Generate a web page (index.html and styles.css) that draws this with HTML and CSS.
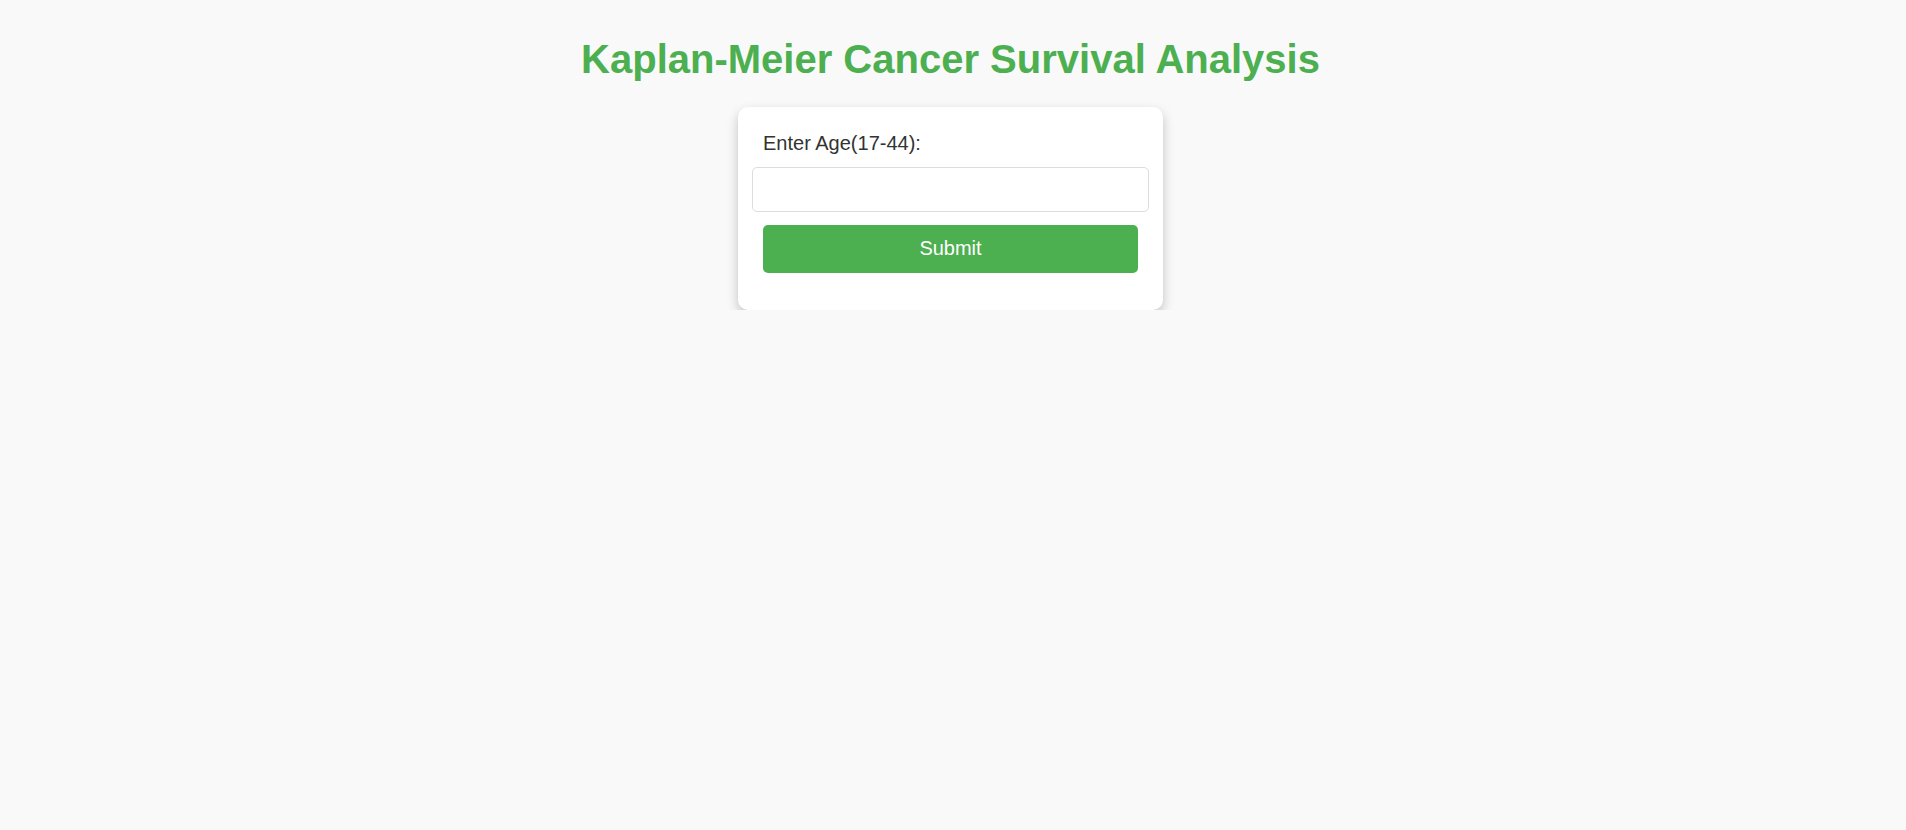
FILE: index.html
```html
<!DOCTYPE html>
<html lang="en">
<head>
<meta charset="utf-8">
<title>Kaplan-Meier Cancer Survival Analysis</title>
<link rel="stylesheet" href="styles.css">
</head>
<body>
<main class="page">
  <h1 class="title">Kaplan-Meier Cancer Survival Analysis</h1>
  <form class="card">
    <label class="label" for="age">Enter Age(17-44):</label>
    <input class="input" id="age" type="number">
    <button class="submit" type="button">Submit</button>
  </form>
</main>
</body>
</html>
```

FILE: styles.css
```css
html, body {
  margin: 0;
  padding: 0;
  background: #f9f9f9;
  font-family: "Liberation Sans", Arial, sans-serif;
}

.page {
  display: flex;
  flex-direction: column;
  align-items: center;
  padding: 36px 5px 0 0;
}

.title {
  margin: 0 0 25px;
  font-size: 40px;
  line-height: 46px;
  font-weight: bold;
  color: #4caf50;
}

.card {
  width: 375px;
  padding: 25px 25px 37px;
  background: #ffffff;
  border-radius: 10px;
  box-shadow: 0 5px 12px rgba(0, 0, 0, 0.22);
  display: flex;
  flex-direction: column;
}

.label {
  font-size: 20px;
  line-height: 23px;
  color: #333333;
}

.input {
  box-sizing: border-box;
  margin: 12px -11px 0;
  height: 45px;
  padding: 10px 12px;
  border: 1px solid #dddddd;
  border-radius: 5px;
  font-size: 20px;
  font-family: inherit;
  background: #ffffff;
  outline: none;
}

.submit {
  margin-top: 13px;
  height: 48px;
  padding: 0 0 2px;
  border: none;
  border-radius: 5px;
  background: #4caf50;
  color: #ffffff;
  font-size: 20px;
  font-family: inherit;
  cursor: pointer;
}
```
